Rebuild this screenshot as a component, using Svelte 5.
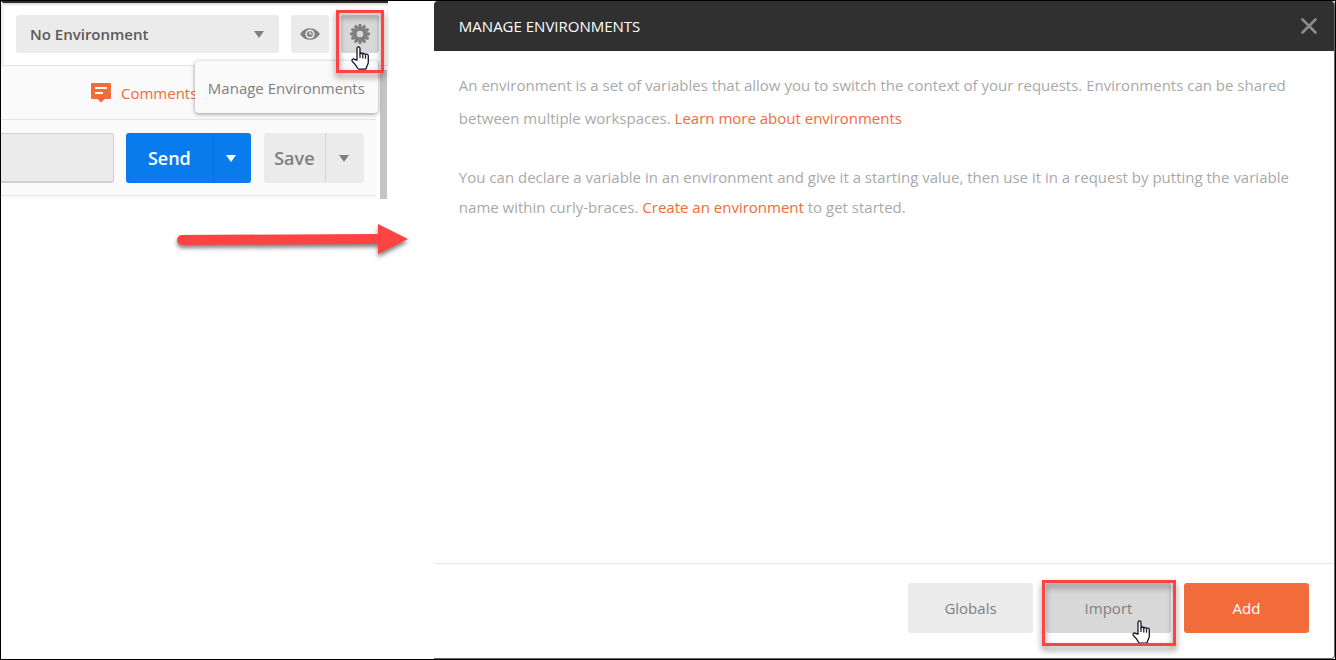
<script>
  let environment = $state('none');
</script>

{#snippet caret()}
  <svg class="caret" viewBox="0 0 10 7" width="10" height="7" aria-hidden="true">
    <path d="M0 0h10L5 7z" fill="currentColor" />
  </svg>
{/snippet}

{#snippet hand()}
  <svg class="hand" viewBox="0 0 18 24" width="18" height="24" aria-hidden="true">
    <path
      d="M6 14V2.4C6 .3 9 .3 9 2.4V8c.2-1.5 2.700-1.300 2.800.4.300-1.400 2.600-1.100 2.700.5.400-1.200 2.800-.9 2.800 1v6c0 2.500-1.500 3.600-2 6.100-.2.800-.8 1.200-1.600 1.200H8.500c-.9 0-1.500-.4-2-1.200-1.400-2.600-2.300-4-4.900-6.300-1.700-1.700.3-3.500 2.100-2.200z"
      fill="#fff" stroke="#14142b" stroke-width="1.300" stroke-linejoin="round" />
    <path d="M9 7.500V12M11.800 8.400V12.500M14.500 9.200V12.800" fill="none" stroke="#14142b" stroke-width="1.200" />
  </svg>
{/snippet}

<main class="frame">
  <div class="left">
    <section class="app" aria-label="Request builder">
      <div class="env-row">
        <div class="env-select">
          <select aria-label="Environment" bind:value={environment}>
            <option value="none">No Environment</option>
          </select>
          {@render caret()}
        </div>
        <button class="icon-button" aria-label="Environment quick look">
          <svg viewBox="0 0 20 12" width="20" height="12" aria-hidden="true">
            <path d="M0 6C2.500 2 6 .2 10 .2S17.500 2 20 6c-2.500 4-6 5.800-10 5.800S2.500 10 0 6z" fill="#808080" />
            <circle cx="10" cy="6" r="4.600" fill="#ebebeb" />
            <circle cx="10" cy="6" r="3" fill="#808080" />
            <path d="M10 3.500V6h2.500" fill="none" stroke="#ebebeb" stroke-width="1.200" />
          </svg>
        </button>
        <div class="marked gear">
          <button class="icon-button pressed" aria-label="Environment settings">
            <svg viewBox="-10 -10 20 20" width="20" height="20" aria-hidden="true">
              <g fill="#808080">
                {#each Array(12) as _, i}
                  <path d="M-2-6.500L-1.200-10H1.200L2-6.500z" transform="rotate({i * 30})" />
                {/each}
              </g>
              <circle r="5.300" fill="none" stroke="#808080" stroke-width="4" />
            </svg>
          </button>
          {@render hand()}
          <span class="mark"></span>
        </div>
        <div class="menu" role="menu">
          <button role="menuitem">Manage Environments</button>
        </div>
      </div>
      <div class="body">
        <div class="content">
          <div class="comments-row">
            <a href="#comments">
              <svg viewBox="0 0 20 20" width="20" height="20" aria-hidden="true">
                <path d="M1 0h18q1 0 1 1v14q0 1-1 1h-5.500L10 19.500 6.500 16H1q-1 0-1-1V1q0-1 1-1z" fill="#f26b3a" />
                <path d="M4 5h12M4 10h8" stroke="#fff" stroke-width="2" />
              </svg>
              <span>Comments</span>
            </a>
          </div>
          <div class="request-row">
            <input class="url" type="text" aria-label="Request URL" />
            <div class="split send">
              <button>Send</button>
              <button class="more" aria-label="Send options">{@render caret()}</button>
            </div>
            <div class="split save">
              <button>Save</button>
              <button class="more" aria-label="Save options">{@render caret()}</button>
            </div>
          </div>
        </div>
        <div class="scrollbar"></div>
      </div>
    </section>
    <svg class="arrow" viewBox="0 0 232 32" width="232" height="32" aria-hidden="true">
      <path d="M5 11L201 10V0l30 15-30 15V20L5 21A5 5 0 0 1 5 11z" fill="#ff4343" />
    </svg>
  </div>

  <section class="modal" aria-labelledby="modal-title">
    <header>
      <h1 id="modal-title">MANAGE ENVIRONMENTS</h1>
      <button class="close" aria-label="Close">
        <svg viewBox="0 0 16 16" width="16" height="16" aria-hidden="true">
          <path d="M1.500 1.500l13 13M14.500 1.500l-13 13" stroke="#8c8c8c" stroke-width="2.600" stroke-linecap="round" />
        </svg>
      </button>
    </header>
    <div class="text">
      <p class="intro">
        An environment is a set of variables that allow you to switch the context of your requests. Environments can be
        shared between multiple workspaces. <a href="#learn">Learn more about environments</a>
      </p>
      <p>
        You can declare a variable in an environment and give it a starting value, then use it in a request by putting
        the variable name within curly-braces. <a href="#create">Create an environment</a> to get started.
      </p>
    </div>
    <footer>
      <button>Globals</button>
      <div class="marked import">
        <button class="pressed">Import</button>
        {@render hand()}
        <span class="mark"></span>
      </div>
      <button class="primary">Add</button>
    </footer>
  </section>
</main>

<style>
  :global(body) {
    margin: 0;
    background: #fff;
  }

  .frame {
    box-sizing: border-box;
    min-height: 100vh;
    border: 1px solid #000;
    display: grid;
    grid-template-columns: minmax(340px, 29%) minmax(0, 1fr);
    column-gap: 46px;
    font: 15px/20px 'Open Sans', sans-serif;
    color: #808080;
  }

  button,
  select,
  input {
    box-sizing: border-box;
    margin: 0;
    padding: 0;
    border: 0;
    border-radius: 3px;
    font: inherit;
    color: inherit;
    background: #ebebeb;
  }

  button {
    display: flex;
    align-items: center;
    justify-content: center;
    cursor: pointer;
  }

  a {
    color: #f26b3a;
    text-decoration: none;
  }

  svg {
    display: block;
    flex: none;
  }

  .pressed {
    background: #d8d8d8;
  }

  .env-row {
    position: relative;
    display: flex;
    gap: 12px;
    padding: 12px 9px 12px 13px;
    border-top: 2px solid #302c2e;
    border-bottom: 1px solid #e4e4e4;
    border-left: 2px solid #f0eeee;
    box-shadow: inset 0 2px 2px #ddd;
  }

  .env-select {
    position: relative;
    flex: 1;
    display: flex;
  }

  .env-select select {
    width: 100%;
    height: 38px;
    padding: 0 14px;
    appearance: none;
    font-weight: 600;
    color: #5a5a5a;
  }

  .env-select .caret {
    position: absolute;
    right: 15px;
    top: 16px;
    pointer-events: none;
  }

  .icon-button {
    width: 38px;
    height: 38px;
  }

  .marked {
    position: relative;
    z-index: 3;
  }

  .mark {
    position: absolute;
    border: 3px solid #ff4343;
    filter: drop-shadow(0 4px 3px rgba(0, 0, 0, 0.5));
    pointer-events: none;
  }

  .hand {
    position: absolute;
    pointer-events: none;
  }

  .gear .mark {
    inset: -5px -5px -20px -5px;
  }

  .gear .hand {
    left: 10px;
    top: 31px;
  }

  .menu {
    position: absolute;
    z-index: 2;
    right: 10px;
    top: 58px;
    border-radius: 4px;
    background: #fafafa;
    box-shadow: 0 1px 4px rgba(0, 0, 0, 0.4);
  }

  .menu button {
    height: 52px;
    padding: 2px 13px 0;
    background: none;
    white-space: nowrap;
  }

  .body {
    display: flex;
  }

  .content {
    flex: 1;
    min-width: 0;
    padding-bottom: 3px;
    background: #fafafa;
  }

  .scrollbar {
    width: 7px;
    margin: 4px 1px 0 4px;
    background: #c4c4c4;
  }

  .comments-row {
    padding: 16px 0 16px 90px;
    border-bottom: 1px solid #e4e4e4;
  }

  .comments-row a {
    display: inline-flex;
    align-items: center;
    gap: 10px;
    height: 21px;
    vertical-align: top;
  }

  .request-row {
    display: flex;
    padding: 13px 12px 12px 0;
    border-bottom: 1px solid #e4e4e4;
    font-size: 18px;
    font-weight: 600;
  }

  .url {
    flex: 1;
    min-width: 0;
    height: 50px;
    margin-right: 12px;
    border: 1px solid #d0d0d0;
    border-left: 0;
    border-bottom-width: 2px;
    border-radius: 0 3px 3px 0;
  }

  .split {
    display: flex;
    height: 50px;
    border-radius: 3px;
    overflow: hidden;
  }

  .split button {
    border-radius: 0;
  }

  .split .more {
    width: 38px;
    padding-right: 2px;
    border-left: 1px solid #d4d4d4;
  }

  .send {
    margin-right: 13px;
    color: #fff;
  }

  .send button {
    width: 87px;
    background: #097bed;
  }

  .send .more {
    border-color: #066dd4;
  }

  .save button {
    width: 61px;
  }

  .save .more {
    width: 39px;
  }

  .arrow {
    position: relative;
    z-index: 1;
    margin: 25px 0 0 176px;
    overflow: visible;
    filter: drop-shadow(0 3px 2px rgba(0, 0, 0, 0.5));
  }

  .modal {
    display: flex;
    flex-direction: column;
    border: solid #666;
    border-width: 0 1px 1px 0;
    border-radius: 4px 4px 4px 0;
    overflow: hidden;
  }

  header {
    display: flex;
    align-items: center;
    justify-content: space-between;
    height: 50px;
    padding: 0 17px 0 25px;
    background: #303030;
  }

  h1 {
    margin: 0;
    font-size: 15px;
    font-weight: 400;
    color: #fff;
  }

  .close {
    background: none;
  }

  .text {
    flex: 1;
    padding: 18px 25px;
    color: #a9a9a9;
  }

  p {
    margin: 0;
    line-height: 30px;
  }

  .intro {
    margin-bottom: 27px;
    line-height: 33px;
  }

  footer {
    display: flex;
    justify-content: flex-end;
    gap: 13px;
    padding: 19px 25px 25px;
    border-top: 1px solid #e6e6e6;
  }

  footer button {
    width: 125px;
    height: 50px;
  }

  footer .primary {
    background: #f26b3a;
    color: #fff;
  }

  .import .mark {
    inset: -3px -5px -13px -4px;
  }

  .import .hand {
    left: 86px;
    top: 37px;
  }
</style>
